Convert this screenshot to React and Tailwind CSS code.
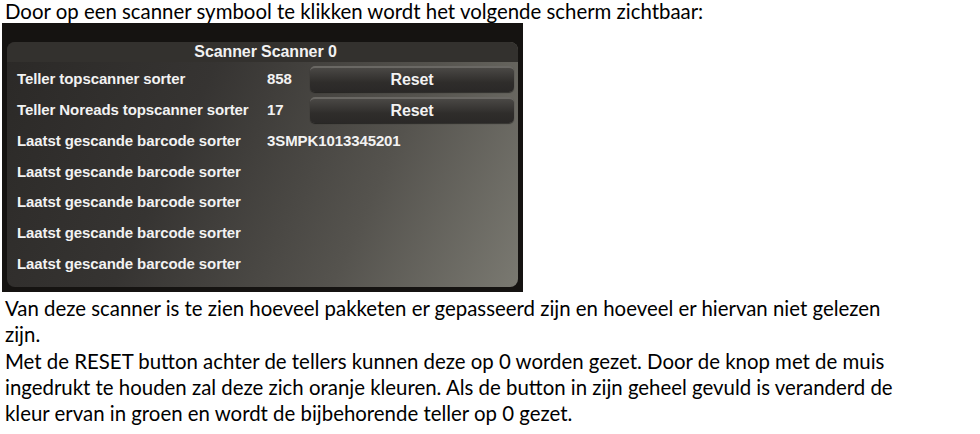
export default function App() {
  const rows = [
    { label: "Teller topscanner sorter", value: "858", reset: true },
    { label: "Teller Noreads topscanner sorter", value: "17", reset: true },
    { label: "Laatst gescande barcode sorter", value: "3SMPK1013345201" },
    { label: "Laatst gescande barcode sorter" },
    { label: "Laatst gescande barcode sorter" },
    { label: "Laatst gescande barcode sorter" },
    { label: "Laatst gescande barcode sorter" },
  ];

  return (
    <div className="w-[980px] h-[434px] bg-white text-black font-['Lato','Open_Sans',sans-serif] overflow-hidden">
      <p className="pl-[5px] h-[23px] text-[20.4px] leading-[23px]">
        Door op een scanner symbool te klikken wordt het volgende scherm zichtbaar:
      </p>

      <div className="ml-[2px] w-[521px] h-[269px] bg-[#151311] px-[5px] pt-[19px] pb-[5px]">
        <div className="h-full rounded-[8px] bg-[linear-gradient(115deg,#2b2927_0%,#363432_35%,#55534e_70%,#7a7971_100%)] font-['Liberation_Sans',Arial,sans-serif] text-[#f2f2f2] text-[15px] font-bold tracking-[-0.1px]">
          <div className="h-[20px] rounded-t-[8px] bg-[#33312e] text-center text-[16px] leading-[20px] pl-[6px]">
            Scanner Scanner 0
          </div>
          <div className="flex flex-col pl-[10px] pr-[4px] pt-[2px]">
            {rows.map((r, i) => (
              <div key={i} className="h-[30.8px] flex items-center">
                <span className="w-[250px] shrink-0">{r.label}</span>
                <span className="w-[43px] shrink-0">{r.value}</span>
                {r.reset && (
                  <div className="flex-1 h-[26px] rounded-[5px] border-t-[2px] border-[#6a6864] bg-[linear-gradient(180deg,#4a4845_0%,#2f2d2b_60%,#2a2827_100%)] text-center text-[16px] leading-[24px] shadow-[0_1px_1px_rgba(0,0,0,0.5)]">
                    Reset
                  </div>
                )}
              </div>
            ))}
          </div>
        </div>
      </div>

      <div className="pl-[5px] pt-[3px] text-[20.4px] leading-[26.3px]">
        <p>Van deze scanner is te zien hoeveel pakketen er gepasseerd zijn en hoeveel er hiervan niet gelezen</p>
        <p>zijn.</p>
        <p>Met de RESET button achter de tellers kunnen deze op 0 worden gezet. Door de knop met de muis</p>
        <p>ingedrukt te houden zal deze zich oranje kleuren. Als de button in zijn geheel gevuld is veranderd de</p>
        <p>kleur ervan in groen en wordt de bijbehorende teller op 0 gezet.</p>
      </div>
    </div>
  );
}
